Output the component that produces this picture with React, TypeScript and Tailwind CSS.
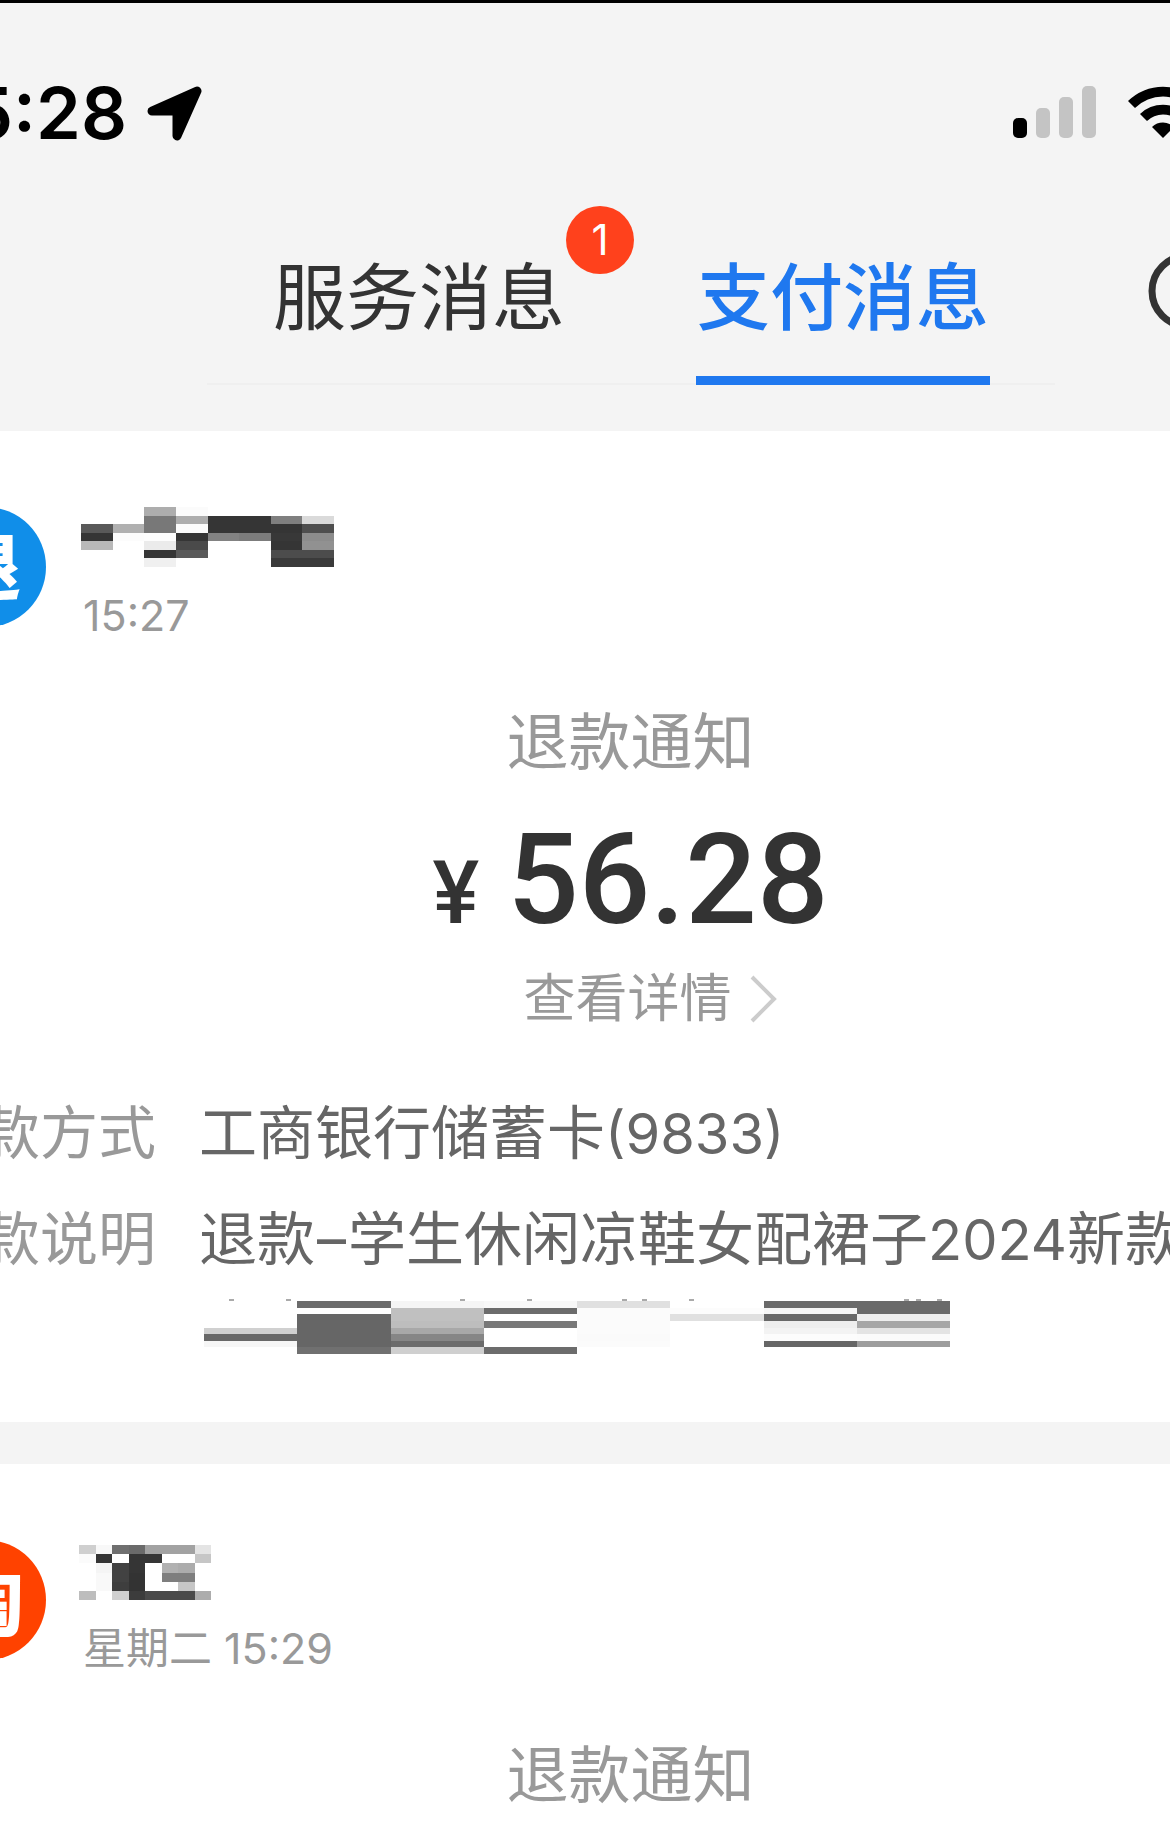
import React from "react";

const NAME_A = [
  ["", "", "#adadad", "#fbfbfb", "", "", "", ""],
  ["", "", "#787878", "#adadad", "#353535", "#353535", "#7f7f7f", "#dadada"],
  ["#595959", "#b0b0b0", "#787878", "#fbfbfb", "#353535", "#353535", "#353535", "#4e4e4e"],
  ["#353535", "#fcfcfc", "#fdfdfd", "#353535", "#828282", "#7c7c7c", "#383838", "#8c8c8c"],
  ["#b9b9b9", "", "#ebebeb", "#4a4a4a", "", "", "#353535", "#919191"],
  ["", "", "#353535", "#5a5a5a", "", "", "#4c4c4c", "#4c4c4c"],
  ["", "", "#f0f0f0", "", "", "", "#3a3a3a", "#3a3a3a"],
];

const NAME_B = [
  ["#cfcfcf", "#f8f8f8", "#6f6f6f", "#6a6a6a", "#a2a2a2", "#a2a2a2", "#a2a2a2", "#e4e4e4"],
  ["#fbfbfb", "#353535", "", "#353535", "#353535", "", "", "#c6c6c6"],
  ["", "#f5f5f5", "#424242", "#353535", "", "#b1b1b1", "#acacac", ""],
  ["", "#f9f9f9", "#424242", "#333333", "", "#7e7e7e", "#7e7e7e", ""],
  ["", "#f9f9f9", "#3e3e3e", "#333333", "", "", "#c6c6c6", ""],
  ["#bdbdbd", "", "#d0d0d0", "#3c3c3c", "#4a4a4a", "#4a4a4a", "#4a4a4a", "#acacac"],
];

const DETAIL = [
  ["", "#6c6c6c", "#f5f5f5", "#f8f8f8", "#e0e0e0", "", "#6a6a6a", "#6a6a6a"],
  ["", "", "#c0c0c0", "#6c6c6c", "#fbfbfb", "#fcfcfc", "#f5f5f5", "#6a6a6a"],
  ["", "#666666", "#c0c0c0", "", "#fbfbfb", "#e0e0e0", "#686868", "#eeeeee"],
  ["", "#666666", "#bdbdbd", "#787878", "#fbfbfb", "", "#eeeeee", "#a6a6a6"],
  ["#d0d0d0", "#666666", "#a8a8a8", "", "#fbfbfb", "", "#f3f3f3", "#e4e4e4"],
  ["#686868", "#666666", "#868686", "", "#fafafa", "", "#fcfcfc", "#fbfbfb"],
  ["#f6f6f6", "#666666", "#6c6c6c", "", "#fbfbfb", "", "#666666", "#9d9d9d"],
  ["", "#707070", "#cfcfcf", "#6c6c6c", "", "", "", ""],
];

const TICKS = [25, 82, 256, 323, 418, 438, 485, 700, 712, 733];

function Mosaic({ cells, className }: { cells: string[][]; className: string }) {
  return (
    <svg
      aria-hidden="true"
      className={className}
      viewBox={`0 0 ${cells[0].length} ${cells.length}`}
      preserveAspectRatio="none"
      shapeRendering="crispEdges"
    >
      {cells.map((row, y) =>
        row.map((fill, x) => (fill ? <rect key={`${x}-${y}`} x={x} y={y} width="1" height="1" fill={fill} /> : null)),
      )}
    </svg>
  );
}

function StatusBar() {
  return (
    <div className="flex h-[188px] items-center justify-between overflow-hidden border-t-[3px] border-black pt-8">
      <div className="flex items-center gap-5 pt-[3px]">
        <div className="flex w-[127px] justify-end overflow-hidden">
          <time className="text-[72px] leading-none font-semibold">15:28</time>
        </div>
        <svg viewBox="0 0 55 55" className="size-[55px] shrink-0" aria-label="定位">
          <path d="M5 25 50 5 30 50V25Z" fill="#000" stroke="#000" strokeWidth="9" strokeLinejoin="round" />
        </svg>
      </div>
      <div className="-mr-[28px] flex shrink-0 items-end gap-8">
        <div className="flex items-end gap-[9px]" aria-label="信号">
          <span className="h-5 w-[14px] rounded-[5px] bg-black" />
          <span className="h-[30px] w-[14px] rounded-[5px] bg-[#c4c4c4]" />
          <span className="h-[41px] w-[14px] rounded-[5px] bg-[#c4c4c4]" />
          <span className="h-[52px] w-[14px] rounded-[5px] bg-[#c4c4c4]" />
        </div>
        <svg viewBox="0 0 70 52" className="h-[52px] w-[70px] shrink-0" aria-label="无线网络">
          <path d="M0 15A50 50 0 0 1 70 15L63 22A40 40 0 0 0 7 22Z" />
          <path d="M12 28A33 33 0 0 1 58 28L51 35A23 23 0 0 0 19 35Z" />
          <path d="M24 41A16 16 0 0 1 46 41L35 52Z" />
        </svg>
      </div>
    </div>
  );
}

function TabBar() {
  return (
    <div className="flex items-start justify-between overflow-hidden pb-[46px] pl-[207px]">
      <nav className="flex h-[197px] w-[848px] shrink-0 border-b-2 border-[#efefef]">
        <button className="flex flex-1 items-start justify-center pt-[73px]">
          <span className="relative text-[73px] leading-none text-[#333]">
            服务消息
            <span className="absolute -top-[55px] -right-[69px] flex size-[68px] items-center justify-center rounded-full bg-[#ff411c] text-[42px] text-white">
              1
            </span>
          </span>
        </button>
        <button className="flex flex-1 justify-center">
          <span className="-mb-[2px] border-b-[9px] border-[#1f78ef] px-[1px] pt-[73px] text-[73px] leading-none font-medium text-[#1f78ef]">
            支付消息
          </span>
        </button>
      </nav>
      <button className="mt-[61px] -mr-[62px] h-[84px] shrink-0" aria-label="搜索">
        <svg viewBox="0 0 84 84" className="size-[84px]" fill="none" stroke="#333" strokeWidth="7">
          <circle cx="39" cy="42" r="35" />
          <path d="m64 67 15 15" />
        </svg>
      </button>
    </div>
  );
}

function CardHeader({
  avatar,
  name,
  time,
}: {
  avatar: React.ReactNode;
  name: React.ReactNode;
  time: string;
}) {
  return (
    <div className="-ml-[74px] flex items-start">
      {avatar}
      <div className="ml-[33px]">
        <div className="flex h-[60px] items-end">{name}</div>
        <time className="mt-[18px] ml-1 block text-[43px] leading-[60px] text-[#999]">{time}</time>
      </div>
    </div>
  );
}

function Row({ label, children }: { label: string; children: React.ReactNode }) {
  return (
    <div className="flex">
      <dt className="-ml-[76px] w-[275px] shrink-0 text-[#999]">{label}</dt>
      <dd className="text-[#666]">{children}</dd>
    </div>
  );
}

export default function App() {
  return (
    <div className="min-h-screen overflow-hidden bg-white font-[Inter,'Noto_Sans_CJK_SC',sans-serif] text-black">
      <header className="bg-[#f4f4f4]">
        <StatusBar />
        <TabBar />
      </header>
      <main>
        <article className="h-[991px] overflow-hidden pt-[76px]">
          <CardHeader
            avatar={
              <span className="flex size-[120px] items-center justify-center rounded-full bg-[#108ee9] pt-1 text-[70px] leading-none font-black text-white">
                退
              </span>
            }
            name={<Mosaic cells={NAME_A} className="ml-[2px] h-[60px] w-[253px]" />}
            time="15:27"
          />
          <div className="mt-[53px] flex flex-col items-center pl-[91px]">
            <h2 className="text-[62px] leading-[90px] text-[#999]">退款通知</h2>
            <p className="mt-6 flex items-baseline gap-7 font-[Roboto,sans-serif] leading-[136px] font-medium text-[#333]">
              <span className="text-[88px]">¥</span>
              <span className="text-[126px]">56.28</span>
            </p>
            <a href="#detail" className="ml-10 flex items-center gap-[18px] text-[52px] leading-[76px] text-[#999]">
              查看详情
              <svg viewBox="0 0 28 48" className="h-12 w-7" fill="none" stroke="#ccc" strokeWidth="4">
                <path d="m2 2 22 22L2 46" />
              </svg>
            </a>
          </div>
          <dl className="mt-[54px] flex flex-col gap-5 text-[58px] leading-[85px] whitespace-nowrap">
            <Row label="退款方式">
              工商银行储蓄卡<span className="text-[56px]">(9833)</span>
            </Row>
            <Row label="退款说明">
              退款<span className="mx-[2px]">–</span>学生休闲凉鞋女配裙子<span className="text-[56px]">2024</span>新款
              <svg aria-hidden="true" viewBox="0 0 746 2" className="mt-4 ml-[5px] h-[2px] w-[746px]" fill="#aaa">
                {TICKS.map((x) => (
                  <rect key={x} x={x} width="5" height="2" />
                ))}
              </svg>
              <Mosaic cells={DETAIL} className="ml-[5px] h-[53px] w-[746px]" />
            </Row>
          </dl>
        </article>
        <div className="h-[42px] bg-[#f4f4f4]" />
        <article className="h-[369px] overflow-hidden pt-[76px]">
          <CardHeader
            avatar={
              <span className="flex size-[120px] items-center justify-center rounded-full bg-[#ff4200] pt-1 text-[76px] leading-none font-black text-white">
                淘
              </span>
            }
            name={<Mosaic cells={NAME_B} className="h-[55px] w-[132px]" />}
            time="星期二 15:29"
          />
          <div className="mt-[53px] flex flex-col items-center pl-[91px]">
            <h2 className="text-[62px] leading-[90px] text-[#999]">退款通知</h2>
          </div>
        </article>
      </main>
    </div>
  );
}
